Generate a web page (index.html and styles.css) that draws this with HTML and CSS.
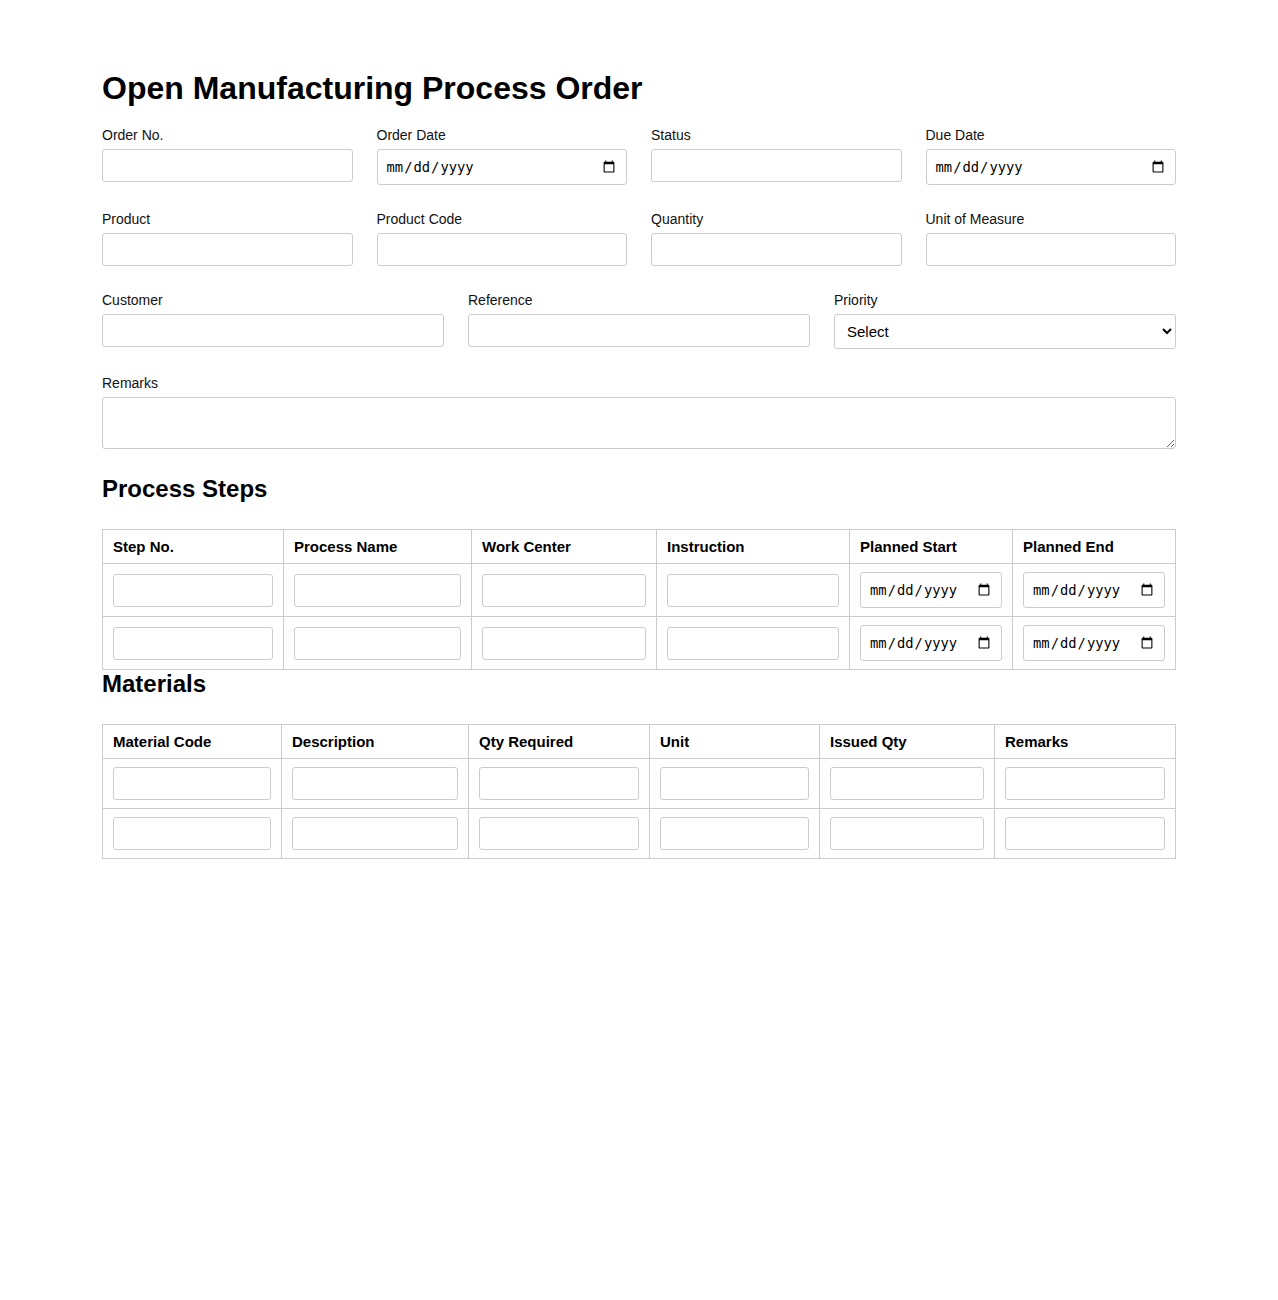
FILE: index.html
```html
<!DOCTYPE html>
<html lang="en">
<head>
<meta charset="utf-8">
<title>Open Manufacturing Process Order</title>
<link rel="stylesheet" href="styles.css">
</head>
<body>
<div class="page">
  <h1 class="title">Open Manufacturing Process Order</h1>
  <form class="form">
    <div class="row cols-4">
      <div class="field"><label class="label">Order No.</label><input class="input" type="text"></div>
      <div class="field"><label class="label">Order Date</label><input class="input date" type="date"></div>
      <div class="field"><label class="label">Status</label><input class="input" type="text"></div>
      <div class="field"><label class="label">Due Date</label><input class="input date" type="date"></div>
    </div>
    <div class="row cols-4">
      <div class="field"><label class="label">Product</label><input class="input" type="text"></div>
      <div class="field"><label class="label">Product Code</label><input class="input" type="text"></div>
      <div class="field"><label class="label">Quantity</label><input class="input" type="text"></div>
      <div class="field"><label class="label">Unit of Measure</label><input class="input" type="text"></div>
    </div>
    <div class="row cols-3">
      <div class="field"><label class="label">Customer</label><input class="input" type="text"></div>
      <div class="field"><label class="label">Reference</label><input class="input" type="text"></div>
      <div class="field"><label class="label">Priority</label>
        <select class="input select"><option>Select</option><option>High</option><option>Medium</option><option>Low</option></select>
      </div>
    </div>
    <div class="row">
      <div class="field"><label class="label">Remarks</label><textarea class="input textarea"></textarea></div>
    </div>

    <section class="section">
      <h2 class="subtitle">Process Steps</h2>
      <table class="grid-table">
        <colgroup>
          <col class="w181"><col class="w188"><col class="w185"><col class="w193"><col class="w163"><col class="w163">
        </colgroup>
        <thead>
          <tr><th>Step No.</th><th>Process Name</th><th>Work Center</th><th>Instruction</th><th>Planned Start</th><th>Planned End</th></tr>
        </thead>
        <tbody>
          <tr>
            <td><input class="input" type="text"></td>
            <td><input class="input" type="text"></td>
            <td><input class="input" type="text"></td>
            <td><input class="input" type="text"></td>
            <td><input class="input date" type="date"></td>
            <td><input class="input date" type="date"></td>
          </tr>
          <tr>
            <td><input class="input" type="text"></td>
            <td><input class="input" type="text"></td>
            <td><input class="input" type="text"></td>
            <td><input class="input" type="text"></td>
            <td><input class="input date" type="date"></td>
            <td><input class="input date" type="date"></td>
          </tr>
        </tbody>
      </table>
    </section>

    <section class="section tight">
      <h2 class="subtitle">Materials</h2>
      <table class="grid-table">
        <colgroup>
          <col class="w179"><col class="w187"><col class="w181"><col class="w170"><col class="w175"><col class="w181">
        </colgroup>
        <thead>
          <tr><th>Material Code</th><th>Description</th><th>Qty Required</th><th>Unit</th><th>Issued Qty</th><th>Remarks</th></tr>
        </thead>
        <tbody>
          <tr>
            <td><input class="input" type="text"></td>
            <td><input class="input" type="text"></td>
            <td><input class="input" type="text"></td>
            <td><input class="input" type="text"></td>
            <td><input class="input" type="text"></td>
            <td><input class="input" type="text"></td>
          </tr>
          <tr>
            <td><input class="input" type="text"></td>
            <td><input class="input" type="text"></td>
            <td><input class="input" type="text"></td>
            <td><input class="input" type="text"></td>
            <td><input class="input" type="text"></td>
            <td><input class="input" type="text"></td>
          </tr>
        </tbody>
      </table>
    </section>
  </form>
</div>
</body>
</html>
```

FILE: styles.css
```css
* { box-sizing: border-box; }

html, body {
  margin: 0;
  padding: 0;
  background: #fff;
}

body {
  font-family: "Liberation Sans", Arial, sans-serif;
  color: #000;
}

.page {
  width: 1074px;
  margin: 0 auto;
  padding: 70px 0 60px;
}

.title {
  margin: 0 0 21px;
  font-size: 32px;
  line-height: 36px;
  font-weight: bold;
}

.form {
  display: flex;
  flex-direction: column;
  gap: 26px;
}

.row {
  display: grid;
  grid-template-columns: 1fr;
  gap: 24px;
  align-items: start;
}

.cols-4 { grid-template-columns: repeat(4, 1fr); }
.cols-3 { grid-template-columns: repeat(3, 1fr); }

.field {
  display: flex;
  flex-direction: column;
}

.label {
  display: block;
  font-size: 14px;
  line-height: 16px;
  margin-bottom: 6px;
  color: #111;
}

.input {
  display: block;
  width: 100%;
  height: 33px;
  margin: 0;
  padding: 8px;
  border: 1px solid #ccc;
  border-radius: 3px;
  background: #fff;
  font-family: "Liberation Sans", Arial, sans-serif;
  font-size: 14px;
  color: #000;
}

.date {
  height: 36px;
  font-family: "DejaVu Sans Mono", "Liberation Mono", monospace;
  font-size: 13.8px;
}

.select {
  height: 35px;
  font-size: 15px;
  padding: 0 8px;
}

.textarea {
  height: 52px;
  resize: vertical;
}

.section {
  display: flex;
  flex-direction: column;
}

.tight {
  margin-top: -26px;
}

.subtitle {
  margin: 0 0 26px;
  font-size: 24px;
  line-height: 28px;
  font-weight: bold;
}

.grid-table {
  width: 1073px;
  table-layout: fixed;
  border-collapse: collapse;
}

.grid-table th,
.grid-table td {
  border: 1px solid #ccc;
  padding: 8px 10px;
  text-align: left;
  vertical-align: middle;
}

.grid-table th {
  font-size: 15px;
  line-height: 17px;
  font-weight: bold;
}

.w163 { width: 163px; }
.w170 { width: 170px; }
.w175 { width: 175px; }
.w179 { width: 179px; }
.w181 { width: 181px; }
.w185 { width: 185px; }
.w187 { width: 187px; }
.w188 { width: 188px; }
.w193 { width: 193px; }
```
